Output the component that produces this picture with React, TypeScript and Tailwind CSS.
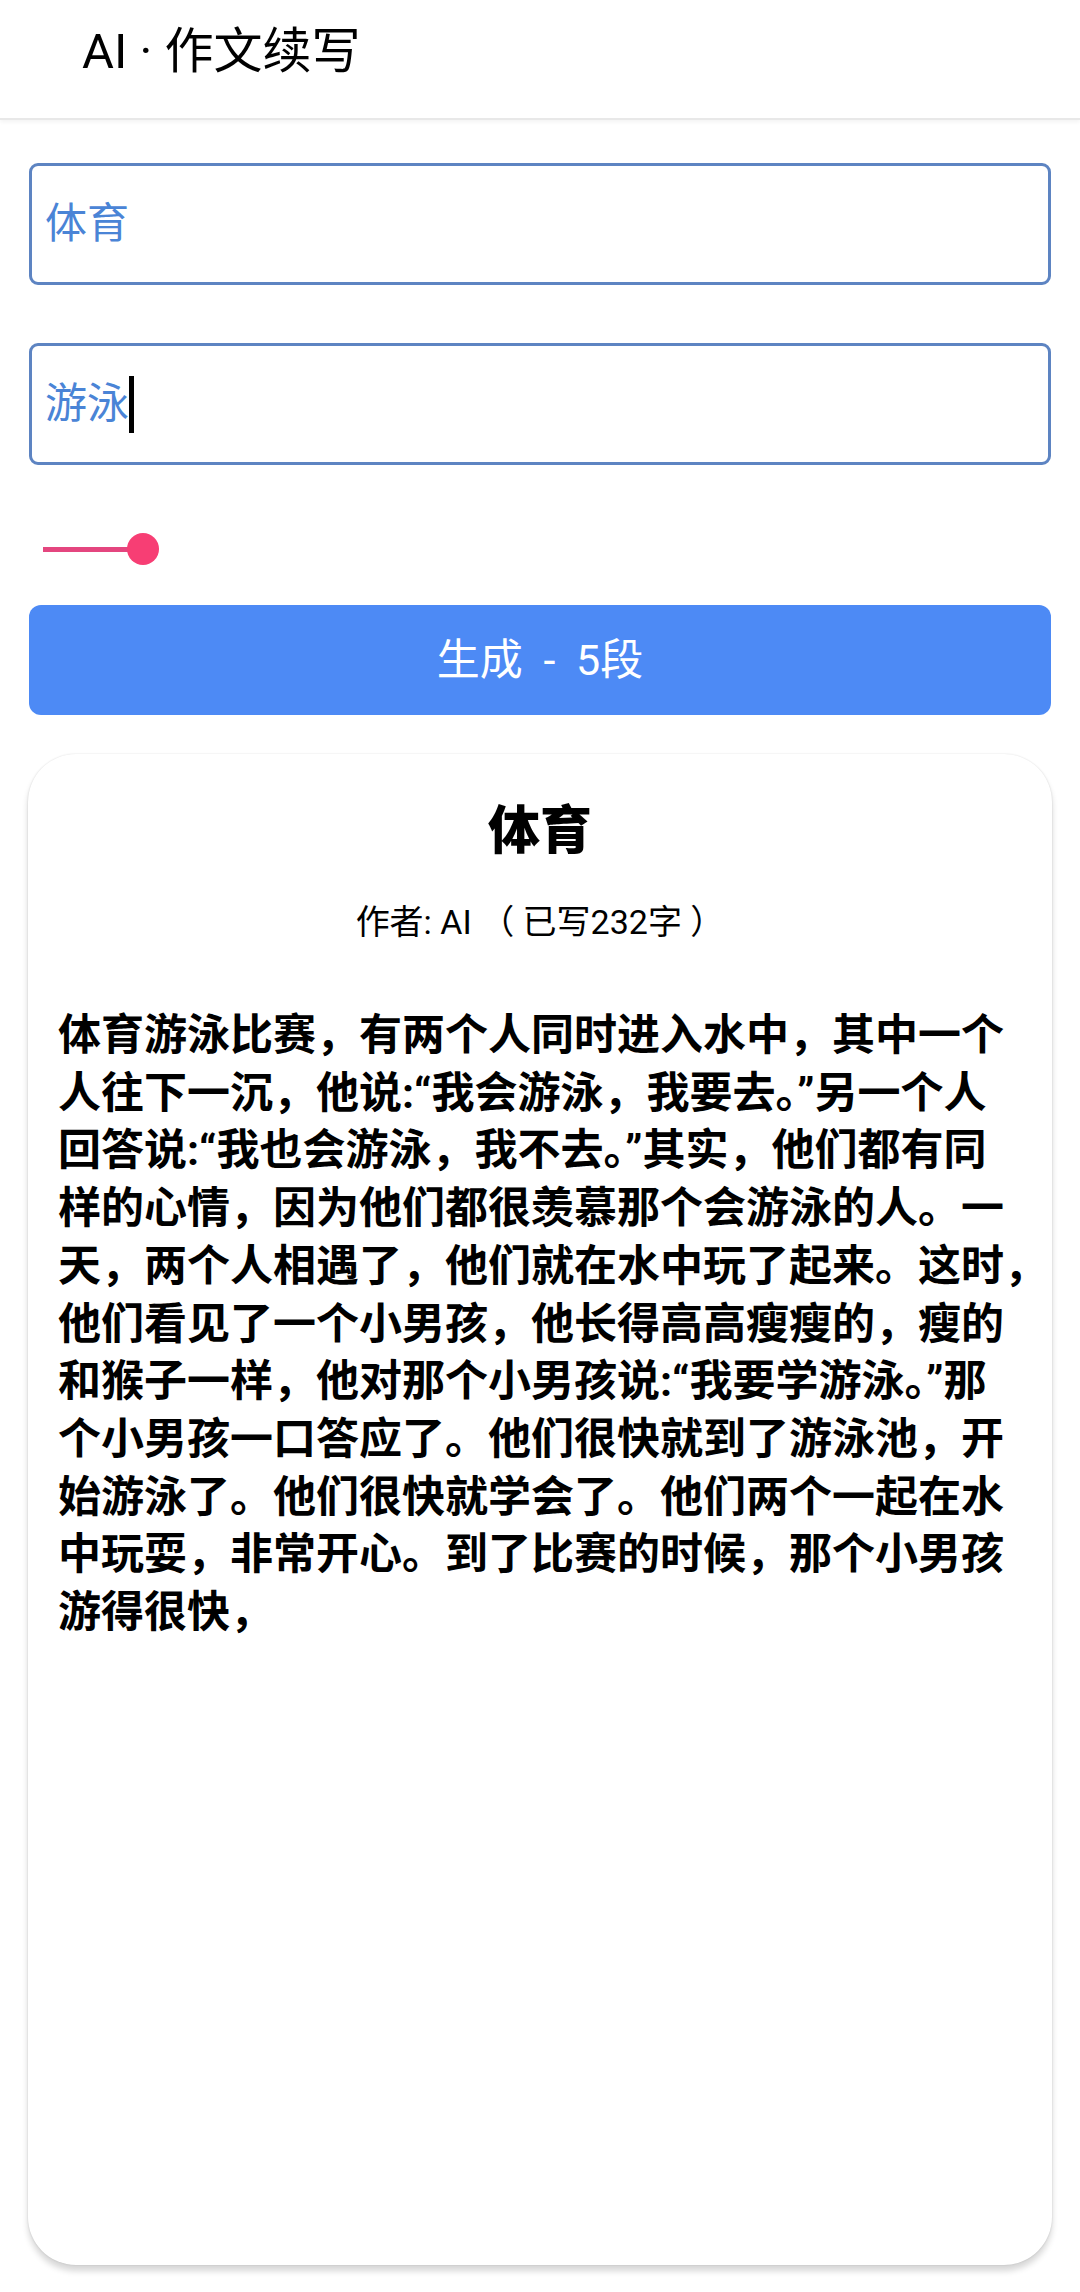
import React from "react";

const font = "font-['Roboto','Noto_Sans_CJK_SC',sans-serif]";

const lines = [
  "体育游泳比赛，有两个人同时进入水中，其中一个",
  "人往下一沉，他说:“我会游泳，我要去。”另一个人",
  "回答说:“我也会游泳，我不去。”其实，他们都有同",
  "样的心情，因为他们都很羡慕那个会游泳的人。一",
  "天，两个人相遇了，他们就在水中玩了起来。这时，",
  "他们看见了一个小男孩，他长得高高瘦瘦的，瘦的",
  "和猴子一样，他对那个小男孩说:“我要学游泳。”那",
  "个小男孩一口答应了。他们很快就到了游泳池，开",
  "始游泳了。他们很快就学会了。他们两个一起在水",
  "中玩耍，非常开心。到了比赛的时候，那个小男孩",
  "游得很快，",
];

function Field({ value, caret }: { value: string; caret?: boolean }) {
  return (
    <div className="mx-[29px] h-[122px] rounded-[9px] border-[3px] border-[#5d84c2] bg-white flex items-center pl-[13px]">
      <span className="text-[42px] leading-none text-[#4a84d6]">{value}</span>
      {caret && <span className="inline-block w-[5px] h-[57px] bg-black" />}
    </div>
  );
}

export default function App() {
  return (
    <div className={`${font} bg-white w-[1080px] min-h-[2292px] text-black`}>
      <header className="h-[120px] border-b-2 border-[#e8e8e8] shadow-[0_2px_4px_rgba(0,0,0,0.05)] pl-[82px] pt-[22px]">
        <h1 className="text-[49px] leading-[60px] font-normal">AI · 作文续写</h1>
      </header>

      <div className="mt-[43px]">
        <Field value="体育" />
      </div>
      <div className="mt-[58px]">
        <Field value="游泳" caret />
      </div>

      <div className="mt-[68px] ml-[43px] h-[32px] flex items-center">
        <div className="w-[86px] h-[5px] bg-[#e4467f]" />
        <div className="w-[32px] h-[32px] -ml-[2px] rounded-full bg-[#f73e74]" />
      </div>

      <button className="mt-[40px] mx-[29px] w-[1022px] h-[110px] rounded-[12px] bg-[#4d8af5] text-white text-[43px] leading-none whitespace-pre [word-spacing:10px]">
        生成 - 5段
      </button>

      <section className="mt-[39px] mx-[28px] h-[1511px] rounded-[48px] bg-white shadow-[0_6px_6px_rgba(0,0,0,0.16),0_0_2px_rgba(0,0,0,0.14)] pt-[47px] px-[30px]">
        <h2 className="text-center text-[52px] leading-[62px] font-black">体育</h2>
        <p className="mt-[37px] text-center text-[34px] leading-[44px] whitespace-pre">作者: AI （ 已写232字 ）</p>
        <div className="mt-[63px] text-[43px] leading-[57.7px] font-bold">
          {lines.map((l) => (
            <div key={l} className="whitespace-nowrap">
              {l}
            </div>
          ))}
        </div>
      </section>
    </div>
  );
}
